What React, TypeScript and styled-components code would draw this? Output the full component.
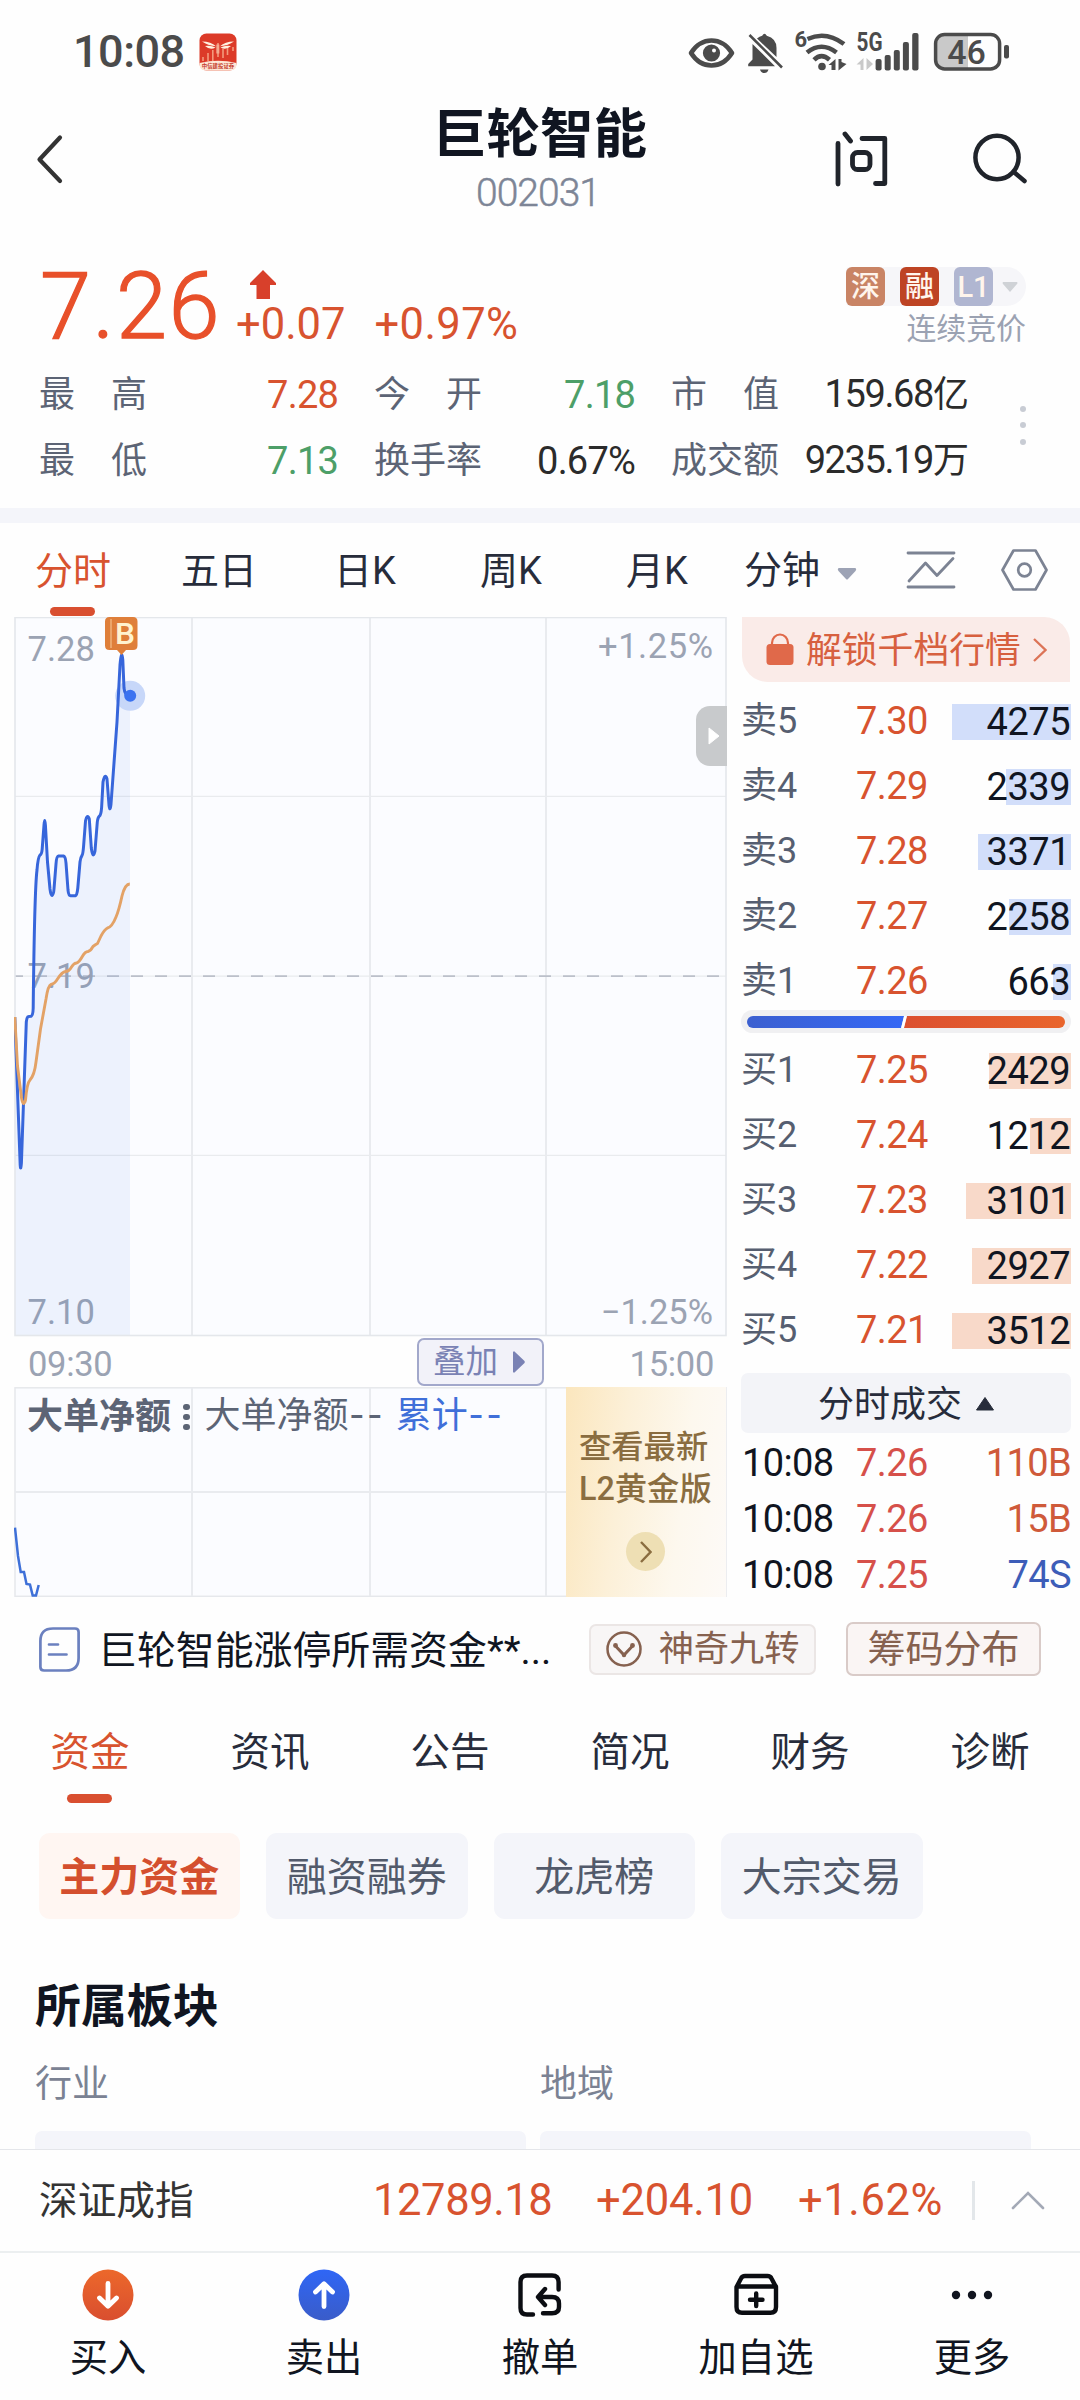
import React from "react";
import styled, { createGlobalStyle } from "styled-components";

const RED = "#d8532f";
const GREEN = "#4d9f68";
const INK = "#101521";
const NAVY = "#272c3b";
const SLATE = "#5c6475";
const MUTED = "#9ba3b3";
const FONT = `Roboto, "Noto Sans CJK SC", sans-serif`;

const GlobalStyle = createGlobalStyle`
  * { box-sizing: border-box; }
  body { margin: 0; background: #fefefe; }
  svg { display: block; flex: none; }
  svg text { font-family: ${FONT}; }
`;

const Screen = styled.div`
  width: 1080px;
  height: 2400px;
  overflow: hidden;
  display: flex;
  flex-direction: column;
  background: #fefefe;
  color: ${INK};
  font-family: ${FONT};
  white-space: nowrap;
`;

const StatusBar = styled.div`
  flex: none;
  height: 103px;
  display: flex;
  align-items: center;
  justify-content: space-between;
  padding: 0 70px 0 73px;
`;

const StatusLeft = styled.div`
  display: flex;
  align-items: center;
  gap: 14px;
`;

const Clock = styled.span`
  font-size: 45px;
  line-height: 50px;
  font-weight: 500;
  letter-spacing: -0.5px;
  color: #4b4b4b;
`;

const Header = styled.header`
  flex: none;
  height: 110px;
  display: grid;
  grid-template-columns: 300px 1fr 300px;
  align-items: center;
`;

const HeaderSide = styled.div<{ $end?: boolean }>`
  display: flex;
  align-items: center;
  justify-content: ${(p) => (p.$end ? "flex-end" : "flex-start")};
  gap: 84px;
  padding: ${(p) => (p.$end ? "0 52px 0 0" : "0 0 0 36px")};
`;

const TitleBlock = styled.div`
  display: flex;
  flex-direction: column;
  align-items: center;
  padding-top: 1px;
`;

const Title = styled.h1`
  margin: 0;
  font-size: 53.5px;
  line-height: 62px;
  font-weight: 600;
`;

const Code = styled.span`
  margin: 6px 4px 0 0;
  font-size: 39px;
  line-height: 42px;
  letter-spacing: -1px;
  font-weight: 300;
  -webkit-text-stroke: 0.5px currentColor;
  color: #7d8596;
`;

const Quote = styled.section`
  flex: none;
  height: 295px;
  padding: 48px 54px 0 39px;
`;

const QuoteTop = styled.div`
  display: flex;
  height: 92px;
`;

const Price = styled.div`
  width: 197px;
  font-size: 92px;
  line-height: 92px;
  font-weight: 300;
  letter-spacing: 1.5px;
  -webkit-text-stroke: 1.3px currentColor;
  padding-left: 1px;
  color: #e8502a;
`;

const ChangeBlock = styled.div`
  align-self: flex-end;
  margin-bottom: 6px;
  display: flex;
  flex-direction: column;
  gap: 4px;
`;

const ArrowSlot = styled.div`
  padding-left: 14px;
`;

const Changes = styled.div`
  display: flex;
  gap: 29px;
  font-size: 43.5px;
  line-height: 44px;
  color: ${RED};
`;

const Percent = styled.span`
  letter-spacing: 0.4px;
`;

const BadgeBlock = styled.div`
  margin: 6px 0 0 auto;
  display: flex;
  flex-direction: column;
  align-items: flex-end;
`;

const BadgeRow = styled.div`
  display: flex;
  align-items: center;
  gap: 15px;
  height: 39px;
  padding-right: 8px;
  border-radius: 4px 20px 20px 4px;
  background: #f6f6f9;
  svg { margin-left: -6px; }
`;

const Badge = styled.span<{ $bg: string }>`
  width: 39px;
  height: 39px;
  border-radius: 6px;
  background: ${(p) => p.$bg};
  color: #fff5ec;
  font-size: 29px;
  line-height: 40px;
  font-weight: 500;
  text-align: center;
`;

const Phase = styled.span`
  font-size: 29.9px;
  line-height: 45px;
  color: #9ba2b2;
`;

const StatsRow = styled.div`
  margin-top: 8px;
  display: flex;
  align-items: center;
  justify-content: space-between;
`;

const StatsGrid = styled.div`
  display: grid;
  grid-template-columns: 299px 261px 298px;
  column-gap: 36px;
  grid-auto-rows: 66px;
  align-items: center;
`;

const Stat = styled.div`
  display: flex;
  justify-content: space-between;
  align-items: center;
  line-height: 50px;
  padding-top: 1px;
`;

const StatLabel = styled.span`
  font-size: 36px;
  color: ${SLATE};
`;

const StatValue = styled.span<{ $color?: string; $tight?: boolean }>`
  font-size: 38px;
  letter-spacing: ${(p) => (p.$tight ? -1.4 : -0.8)}px;
  color: ${(p) => p.$color ?? "#2b2b2b"};
`;

const Unit = styled.span`
  font-size: 36px;
  letter-spacing: 0;
`;

const MoreDots = styled.div`
  display: flex;
  flex-direction: column;
  gap: 10.5px;
  padding-bottom: 4px;
`;

const Dot = styled.i<{ $size: number; $color: string }>`
  width: ${(p) => p.$size}px;
  height: ${(p) => p.$size}px;
  border-radius: 50%;
  background: ${(p) => p.$color};
`;

const Band = styled.div`
  flex: none;
  height: 15px;
  background: #f4f5fa;
`;

const PeriodTabs = styled.nav`
  flex: none;
  height: 94px;
  display: flex;
  align-items: center;
`;

const PeriodTab = styled.div<{ $active?: boolean }>`
  position: relative;
  width: 146px;
  height: 94px;
  line-height: 96px;
  text-align: center;
  font-size: 38px;
  color: ${(p) => (p.$active ? RED : NAVY)};
`;

const Underline = styled.i`
  position: absolute;
  left: 50%;
  bottom: 1px;
  width: 45px;
  height: 9px;
  margin-left: -23px;
  border-radius: 5px;
  background: #d94f30;
`;

const MinuteTab = styled.div`
  display: flex;
  align-items: center;
  gap: 17px;
  height: 94px;
  margin-left: 14px;
  font-size: 38px;
  line-height: 96px;
  color: ${NAVY};
`;

const ToolIcons = styled.div`
  margin-left: auto;
  padding-right: 32px;
  display: flex;
  align-items: center;
  gap: 45px;
`;

const Market = styled.section`
  flex: none;
  height: 980px;
  display: grid;
  grid-template-columns: 727px 330px;
  column-gap: 14px;
`;

const ChartColumn = styled.div`
  padding-left: 14px;
`;

const Stack = styled.div`
  display: grid;
  & > * { grid-area: 1 / 1; }
`;

const Handle = styled.button`
  justify-self: end;
  align-self: start;
  margin: 89px 0 0;
  padding: 0 0 0 12px;
  width: 31px;
  height: 60px;
  border: 0;
  border-radius: 14px 0 0 14px;
  background: #c8cacc;
  display: flex;
  align-items: center;
`;

const TimeAxis = styled.div`
  height: 50px;
  display: flex;
  align-items: center;
  padding: 0 13px 0 14px;
  font-size: 34.5px;
  color: ${MUTED};
`;

const AxisTime = styled.span`
  line-height: 50px;
  margin-top: 3px;
  letter-spacing: -0.3px;
`;

const OverlayButton = styled.button`
  margin: 0 86px 0 auto;
  width: 127px;
  height: 48px;
  padding: 0 2px 0 0;
  display: flex;
  align-items: center;
  justify-content: center;
  gap: 15px;
  border: 2px solid #a2a8cb;
  border-radius: 7px;
  background: #f2f2f9;
  font-family: inherit;
  font-size: 32.5px;
  line-height: 40px;
  color: #7a82b4;
`;

const SubContent = styled.div`
  display: flex;
  justify-content: space-between;
  height: 210px;
`;

const SubLegend = styled.div`
  display: flex;
  align-items: center;
  height: 60px;
  padding-left: 13px;
  font-size: 36px;
  line-height: 60px;
  color: ${SLATE};
`;

const LegendName = styled.b`
  font-weight: 700;
`;

const LegendDots = styled.div`
  display: flex;
  flex-direction: column;
  gap: 3.5px;
  margin: 0 15px 0 12px;
`;

const LegendValue = styled.span<{ $accent?: boolean }>`
  margin: -2px 10px 0 0;
  color: ${(p) => (p.$accent ? "#3f6fd9" : SLATE)};
`;

const Dashes = styled.span`
  padding-left: 1px;
  font-family: "Noto Sans CJK SC", sans-serif;
  font-size: 42px;
  line-height: 1;
  letter-spacing: 3.5px;
`;

const GoldCard = styled.div`
  width: 160px;
  margin-right: 1px;
  padding: 39px 0 0 13px;
  background: linear-gradient(97deg, #fbe6bd 0%, #fcf0d8 35%, #fdf8ee 70%, #fdfaf7 100%);
  color: #8a6d40;
  font-size: 32.3px;
  line-height: 42px;
  font-weight: 500;
`;

const GoldGo = styled.div`
  width: 39px;
  height: 39px;
  margin: 22px 0 0 47px;
  border-radius: 50%;
  background: #eedfb4;
  display: flex;
  align-items: center;
  justify-content: center;
`;

const BookColumn = styled.div`
  display: flex;
  flex-direction: column;
`;

const Unlock = styled.div`
  flex: none;
  width: 328px;
  height: 65px;
  margin: 0 0 6px 1px;
  padding-left: 24px;
  display: flex;
  align-items: center;
  border-radius: 0 26px 0 26px;
  background: #faebe8;
  color: #d7603f;
  font-size: 35.8px;
  line-height: 60px;
`;

const UnlockText = styled.span`
  margin: 2px 12px 0 12px;
`;

const BookRow = styled.div`
  flex: none;
  height: 65px;
  display: grid;
  grid-template-columns: 115px 71px 1fr;
  align-items: center;
  line-height: 67px;
  font-size: 38px;
`;

const Level = styled.span`
  font-size: 36px;
  color: #565e70;
`;

const BookPrice = styled.span`
  letter-spacing: -0.6px;
  color: ${RED};
`;

const Volume = styled.div<{ $depth: number; $color: string }>`
  height: 36px;
  line-height: 36px;
  padding-right: 1px;
  text-align: right;
  letter-spacing: -0.5px;
  background: linear-gradient(${(p) => p.$color}, ${(p) => p.$color}) right / ${(p) => p.$depth}px 100% no-repeat;
`;

const Ratio = styled.div`
  flex: none;
  height: 23px;
  margin: -3px 0 4px;
  padding: 6px 6px 5px;
  border-radius: 12px;
  background: #f0f0f2;
`;

const TradesHead = styled.div`
  flex: none;
  height: 60px;
  margin-top: 11px;
  padding-top: 2px;
  display: flex;
  align-items: center;
  justify-content: center;
  gap: 14px;
  border-radius: 7px;
  background: #f3f4f8;
  color: ${NAVY};
  font-size: 36px;
  line-height: 60px;
`;

const TradesLabel = styled.span`
  padding-top: 2px;
`;

const TradeRow = styled.div`
  flex: none;
  height: 56px;
  display: grid;
  grid-template-columns: 114px 80px 1fr;
  line-height: 60px;
  font-size: 38px;
`;

const TradeCell = styled.span<{ $color: string; $right?: boolean }>`
  color: ${(p) => p.$color};
  text-align: ${(p) => (p.$right ? "right" : "left")};
  padding-left: ${(p) => (p.$right ? 0 : 1)}px;
  letter-spacing: -0.6px;
`;

const InfoRow = styled.div`
  flex: none;
  height: 105px;
  display: flex;
  align-items: center;
  padding: 0 39px 0 38px;
`;

const Headline = styled.span`
  flex: none;
  width: 463px;
  margin: 3px 28px 0 17px;
  font-size: 38.9px;
  line-height: 56px;
`;

const FeatureButton = styled.button<{ $strong?: boolean }>`
  flex: none;
  width: ${(p) => (p.$strong ? 195 : 227)}px;
  height: ${(p) => (p.$strong ? 54 : 51)}px;
  margin: -1px 0 0 ${(p) => (p.$strong ? 30 : 0)}px;
  padding: 0;
  display: flex;
  align-items: center;
  justify-content: center;
  gap: 17px;
  border: 2px solid ${(p) => (p.$strong ? "#d9cbc8" : "#ebe6e5")};
  border-radius: 7px;
  background: ${(p) => (p.$strong ? "#faf5f4" : "#f8f6f6")};
  color: #86614f;
  font-family: inherit;
  font-size: ${(p) => (p.$strong ? 38 : 35.2)}px;
  line-height: 44px;
`;

const SectionTabs = styled.nav`
  flex: none;
  height: 102px;
  display: grid;
  grid-template-columns: repeat(6, 180px);
`;

const SectionTab = styled.div<{ $active?: boolean }>`
  position: relative;
  line-height: 102px;
  text-align: center;
  font-size: 39.5px;
  color: ${(p) => (p.$active ? RED : NAVY)};
`;

const Pills = styled.div`
  flex: none;
  margin: 29px 0 0 38.5px;
  display: flex;
  gap: 26px;
`;

const Pill = styled.div<{ $active?: boolean }>`
  width: 201.5px;
  height: 86px;
  border-radius: 11px;
  text-align: center;
  font-size: 40px;
  line-height: 89px;
  font-weight: ${(p) => (p.$active ? 600 : 400)};
  background: ${(p) => (p.$active ? "#fff6f2" : "#f4f5fa")};
  color: ${(p) => (p.$active ? "#d44f2e" : "#525a6b")};
`;

const Sector = styled.section`
  flex: 1;
  min-height: 0;
  overflow: hidden;
  padding: 57px 0 0 35px;
`;

const SectorTitle = styled.h2`
  margin: 0;
  font-size: 45.9px;
  line-height: 60px;
  font-weight: 600;
`;

const SectorGrid = styled.div`
  margin-top: 24px;
  display: grid;
  grid-template-columns: 491px 491px;
  column-gap: 14px;
`;

const SectorLabel = styled.div`
  font-size: 37px;
  line-height: 50px;
  color: #7b8293;
`;

const SectorCard = styled.div`
  height: 60px;
  margin-top: 21px;
  border-radius: 7px;
  background: #f4f5fa;
`;

const IndexBar = styled.div`
  flex: none;
  height: 104px;
  display: flex;
  align-items: center;
  padding: 0 35px 0 39px;
  border-top: 1px solid #e4e6ea;
  border-bottom: 2px solid #eceff0;
`;

const IndexName = styled.span`
  width: 334px;
  font-size: 38.7px;
  line-height: 60px;
  color: #333;
`;

const IndexValue = styled.span<{ $width: number; $track?: number }>`
  width: ${(p) => p.$width}px;
  font-size: 43.5px;
  line-height: 60px;
  padding-top: 1px;
  letter-spacing: ${(p) => p.$track ?? -0.4}px;
  color: ${RED};
`;

const IndexRule = styled.i`
  width: 3px;
  height: 39px;
  margin: 0 36px 0 auto;
  background: #e3e7ea;
`;

const BottomNav = styled.nav`
  flex: none;
  height: 147px;
  display: grid;
  grid-template-columns: repeat(5, 216px);
`;

const NavItem = styled.div`
  display: flex;
  flex-direction: column;
  align-items: center;
  padding-top: 16px;
`;

const NavIcon = styled.div`
  height: 52px;
  display: flex;
  align-items: center;
`;

const NavLabel = styled.span`
  margin-top: 8px;
  font-size: 38.3px;
  line-height: 58px;
`;

function AppBadge() {
  return (
    <svg width="38" height="38" viewBox="0 0 38 38">
      <rect x="0.5" y="0.5" width="37" height="37" rx="7" fill="#dc3a28" />
      <path d="M0.5 30 Q19 25.5 37.5 30 V31 Q37.5 37.5 31 37.5 H7 Q0.5 37.5 0.5 31 Z" fill="#fde7d6" />
      <path d="M3 8.5 Q12 8.5 17 13.2 Q10 13 3 8.5 Z M6 13 Q12 12 16.5 14.5 Q11 17.5 6 13 Z M35 8.5 Q26 8.5 21 13.2 Q28 13 35 8.5 Z M32 13 Q26 12 21.5 14.5 Q27 17.5 32 13 Z M17.6 11.5 h2.6 v9 h-2.6 z" fill="#fff1df" />
      <path d="M19 10 v14 M13.8 17 v11 M9 20 v8 M4 24 v4 M24 16 v9 M28.500 15 v7 M34 14 v4" stroke="#f39a7c" strokeWidth="1.6" />
      <text x="19" y="35.3" fontSize="5.4" fontWeight="700" textAnchor="middle" fill="#c5402f">中信建投证券</text>
    </svg>
  );
}

function StatusIcons() {
  return (
    <svg width="322" height="60" viewBox="688 21 322 60" fill="#4b4b4b">
      <path d="M691 52 Q699 39.500 711.500 39.500 T732 52 Q724 64.500 711.500 64.500 T691 52 Z" fill="none" stroke="#4b4b4b" strokeWidth="4.600" strokeLinejoin="round" />
      <circle cx="711.500" cy="52" r="8.600" />
      <circle cx="714" cy="49.500" r="2" fill="#fff" />
      <path d="M752.500 43 L775 65.200 H748.200 V63 L752.500 58.500 Z M757 37.500 Q759.500 35.300 762.200 34.800 Q764.500 30.500 766.800 34.800 Q776.500 37.500 776.500 47 V56 Z M760 68.500 H768.500 Q767.500 72 764.300 72 Q761 72 760 68.500 Z" />
      <path d="M749.500 34 L782 66.500" stroke="#4b4b4b" strokeWidth="2.600" />
      <text x="794.500" y="46" fontSize="22" fontWeight="700">6</text>
      <g fill="none" stroke="#4b4b4b" strokeWidth="4.600">
        <path d="M807.500 38 Q826 29.500 844 43" />
        <path d="M807 51.500 Q821.500 40 836.500 51.500" />
        <path d="M814 58.800 Q821.500 51.500 829.500 58.800" />
      </g>
      <circle cx="822" cy="65.500" r="3.800" />
      <path d="M828.500 64 L835.500 58 V69 H831.500 V64 Z M838.500 58 H841.500 V61 L846.500 63 L838.500 69.500 Z" />
      <text x="856.500" y="50.300" fontSize="25" fontWeight="700" textLength="26" lengthAdjust="spacingAndGlyphs">5G</text>
      <path d="M856.500 63.500 L863.500 57 V69 H860.500 V63.500 Z M866.500 57 L873 63 L866.500 69 Z" fill="#c9c9c9" />
      <g>
        <rect x="875.600" y="58" width="6" height="11.500" rx="2" />
        <rect x="884.700" y="54" width="6" height="15.500" rx="2" />
        <rect x="893.800" y="49" width="6" height="20.500" rx="2" />
        <rect x="902.900" y="41" width="6" height="28.500" rx="2" />
        <rect x="912.200" y="32" width="6.300" height="37.500" rx="2" />
      </g>
      <path d="M968 34 H945 Q936 34 936 42 V59 Q936 67.500 945 67.500 H968 Z" fill="#c9c9c9" />
      <rect x="935.600" y="33.500" width="64" height="34.400" rx="9" fill="none" stroke="#4b4b4b" strokeWidth="3.500" />
      <rect x="1004" y="44" width="5" height="13.500" rx="2" />
      <text x="966.500" y="62.500" fontSize="34" fontWeight="500" textAnchor="middle">46</text>
    </svg>
  );
}

function BackIcon() {
  return (
    <svg width="28" height="50" viewBox="0 0 28 50" fill="none" stroke="#333" strokeWidth="4.200" strokeLinecap="round" strokeLinejoin="round">
      <path d="M24 3.500 L3.500 25.500 L24 47" />
    </svg>
  );
}

function AskIcon() {
  return (
    <svg width="54" height="56" viewBox="835 130.500 54 56" fill="none" stroke="#20242b" strokeWidth="4.800" strokeLinecap="round" strokeLinejoin="round">
      <path d="M838 143 V183.500 M845 133.500 L850.500 140.500 M862 138 H884.800 V183 H875.500" />
      <rect x="852.500" y="152" width="17.500" height="17" rx="5" />
    </svg>
  );
}

function SearchIcon() {
  return (
    <svg width="55" height="51" viewBox="973 133.500 55 51" fill="none" stroke="#20242b" strokeWidth="4.500" strokeLinecap="round">
      <ellipse cx="997" cy="158" rx="21.600" ry="21.800" />
      <path d="M1015 173.500 L1024.500 181.500" />
    </svg>
  );
}

function PriceChart() {
  const blue =
    "M14.800 1017 L20.200 1165 Q20.700 1172 21.400 1163 L26.300 1022 Q26.800 1016.500 28.500 1016.500 L31 1016.300 Q33 1015.500 33.200 1008 Q34.500 890 37 870 Q38 857 40 855 Q41.700 854.500 42.200 849 L44 825 Q44.700 816 45.400 825 L47.500 862 L50 889 Q50.800 895.500 52 895.500 Q53.600 895 54 889 L56 864 Q56.500 856.300 58.500 856 H63.500 Q65.500 856.500 66 863 L68 890 Q68.600 895.700 70.500 895.700 H75.500 Q77 895.500 77.800 888 L80 862 Q80.500 857.500 82 855.500 Q83 854 83.600 846 L85.500 821 Q87.200 813 89.300 819 L91.300 848 Q93 860 95 851 L97.300 822 Q97.800 817 100 815.500 Q101.500 813 101.800 804 L103 782 Q105 772.500 107 779 L109 805 Q110 813 111 804 L117 722 L120 665 Q121.600 648 122.800 660 L124 688 Q124.800 696 130 696";
  const avg =
    "M14.800 1017 L17.500 1066 L21.500 1098 Q23.300 1108 25.500 1100 Q27 1083 30 1080 Q34.500 1075 36 1062 L40.500 1029 L46 999 Q48 985.500 51 984.500 Q54.500 984 57.500 979 Q62 972 65.500 971.500 Q69 971.500 71.500 967 Q74 963 76.500 963 Q79 962.500 82 957 Q85 951.500 88 951.500 Q90.500 951 93 946.500 Q95.500 944.500 97.500 943.500 L101 936 Q104.500 929.500 107.500 928 Q112 927 116 917 Q119 910 122 896 Q125 884 129.800 884";
  return (
    <svg width="713" height="720" viewBox="14 617 713 720">
      <rect x="15" y="617.500" width="711" height="718" fill="#fbfcff" />
      <path d="M15 796.400 H726 M15 1155.300 H726" stroke="#e9ebee" strokeWidth="1.300" />
      <path d="M192 618 V1335 M370 618 V1335 M546 618 V1335" stroke="#e9ebef" strokeWidth="2" />
      <path d="M15 976.200 H726" stroke="#e9ebee" strokeWidth="1.300" />
      <path d="M15 976.200 H726" stroke="#bcc0ca" strokeWidth="1.800" strokeDasharray="12 12" strokeDashoffset="4" />
      <g fontSize="34.500" fill={MUTED}>
        <text x="27.500" y="661">7.28</text>
        <text x="27.500" y="988">7.19</text>
        <text x="27.500" y="1324">7.10</text>
        <text x="713" y="658" textAnchor="end" textLength="115">+1.25%</text>
        <text x="713" y="1324" textAnchor="end">−1.25%</text>
      </g>
      <path d={`${blue} V1335 H15 Z`} fill="#4b7fe0" fillOpacity="0.080" />
      <rect x="15" y="617.500" width="711" height="718" fill="none" stroke="#e4e7eb" strokeWidth="1.600" />
      <circle cx="130.200" cy="695.800" r="15" fill="#c7d7f9" />
      <path d={blue} fill="none" stroke="#3766db" strokeWidth="3" strokeLinejoin="round" />
      <circle cx="130.200" cy="695.800" r="6" fill="#3b72f0" />
      <path d={avg} fill="none" stroke="#e3a266" strokeWidth="2.900" strokeLinejoin="round" />
      <path d="M109.500 617 H133 Q137.500 617 137.500 621.500 V645.500 Q137.500 650 133 650 H126 L121.500 655 L117 650 H109.500 Q105 650 105 645.500 V621.500 Q105 617 109.500 617 Z" fill="#df7f3a" />
      <path d="M111 619 V648" stroke="#f0b27a" strokeWidth="1.500" />
      <text x="115" y="643.500" fontSize="30" fontWeight="500" fill="#fff3cf" textLength="20" lengthAdjust="spacingAndGlyphs">B</text>
    </svg>
  );
}

function FlowChart() {
  return (
    <svg width="713" height="210" viewBox="14 1387 713 210">
      <rect x="15" y="1387.800" width="711" height="208.500" fill="#fbfcff" stroke="#e6e8ec" strokeWidth="1.500" />
      <path d="M15 1492 H726 M192 1388 V1596 M370 1388 V1596 M546 1388 V1596" stroke="#e9ebef" strokeWidth="2" />
      <path d="M15 1527.600 L18 1556 L20.700 1572 H24 L26.500 1584 L30 1584.600 L32.700 1595.600 H36 L38.700 1585" fill="none" stroke="#3e70d8" strokeWidth="2.500" />
    </svg>
  );
}

function RatioBar() {
  return (
    <svg width="318" height="12" viewBox="0 0 318 12">
      <defs>
        <linearGradient id="sellSide"><stop offset="0" stopColor="#3c60d0" /><stop offset="1" stopColor="#3467f5" /></linearGradient>
        <linearGradient id="buySide"><stop offset="0" stopColor="#dc5030" /><stop offset="1" stopColor="#e9652c" /></linearGradient>
      </defs>
      <path d="M6 0 H157 L154 12 H6 A6 6 0 0 1 6 0 Z" fill="url(#sellSide)" />
      <path d="M160 0 H312 A6 6 0 0 1 312 12 H157 Z" fill="url(#buySide)" />
      <path d="M158.500 0 L155.500 12" stroke="#fff" strokeWidth="2.500" />
    </svg>
  );
}

const sells: [string, string, string, number][] = [
  ["卖5", "7.30", "4275", 119],
  ["卖4", "7.29", "2339", 65],
  ["卖3", "7.28", "3371", 93],
  ["卖2", "7.27", "2258", 62],
  ["卖1", "7.26", "663", 18],
];
const buys: [string, string, string, number][] = [
  ["买1", "7.25", "2429", 82],
  ["买2", "7.24", "1212", 41],
  ["买3", "7.23", "3101", 105],
  ["买4", "7.22", "2927", 99],
  ["买5", "7.21", "3512", 119],
];
const trades: [string, string, string, string][] = [
  ["10:08", "7.26", "110B", "#cf5a3a"],
  ["10:08", "7.26", "15B", "#cf5a3a"],
  ["10:08", "7.25", "74S", "#3d5db8"],
];

function Book({ rows, color }: { rows: typeof sells; color: string }) {
  return (
    <>
      {rows.map(([level, price, volume, depth]) => (
        <BookRow key={level}>
          <Level>{level}</Level>
          <BookPrice>{price}</BookPrice>
          <Volume $depth={depth} $color={color}>{volume}</Volume>
        </BookRow>
      ))}
    </>
  );
}

const stroke = { fill: "none", stroke: "#0b0d12", strokeWidth: 4.4, strokeLinecap: "round", strokeLinejoin: "round" } as const;

function CircleArrow({ up }: { up?: boolean }) {
  const id = up ? "navSell" : "navBuy";
  return (
    <svg width="52" height="52" viewBox="0 0 52 52">
      <defs>
        <linearGradient id={id} x1="0" y1="0" x2="0" y2="1">
          <stop offset="0" stopColor={up ? "#2f66f6" : "#ec682b"} />
          <stop offset="1" stopColor={up ? "#3a5cc9" : "#d94e2f"} />
        </linearGradient>
      </defs>
      <circle cx="26" cy="26" r="25.500" fill={`url(#${id})`} />
      <path
        d={up ? "M26 37.500 V15.500 M17.500 23 L26 14.800 L34.500 23" : "M26 14.500 V36.500 M17.500 29 L26 37.200 L34.500 29"}
        fill="none" stroke="#fff" strokeWidth="4.800" strokeLinecap="round" strokeLinejoin="round"
      />
    </svg>
  );
}

const navItems = [
  { label: "买入", icon: <CircleArrow /> },
  { label: "卖出", icon: <CircleArrow up /> },
  {
    label: "撤单",
    icon: (
      <svg width="46" height="46" viewBox="517 2273 46 46" {...stroke}>
        <path d="M533 2315.500 H527 Q520.500 2315.500 520.500 2309 V2283 Q520.500 2276.500 527 2276.500 H552 Q558.600 2276.500 558.600 2283 V2290.500" />
        <path d="M545 2290 L538 2298 L545 2306 M539 2298 H552 Q559 2298 559 2304.500 V2308 Q559 2314.300 552 2314.300 H543" />
      </svg>
    ),
  },
  {
    label: "加自选",
    icon: (
      <svg width="46" height="44" viewBox="732 2274 46 44" {...stroke}>
        <path d="M735.500 2288 V2308 Q735.500 2313.800 741 2313.800 H769.500 Q775 2313.800 775 2308 V2288 L770.500 2279.500 Q769.300 2277 766.500 2277 H744 Q741.200 2277 740 2279.500 Z M736 2287.500 H775 M755.200 2294.500 V2307 M749 2300.700 H761.500" />
      </svg>
    ),
  },
  {
    label: "更多",
    icon: (
      <svg width="44" height="12" viewBox="0 0 44 12" fill="#11151f">
        <circle cx="6" cy="6" r="4.200" /><circle cx="22" cy="6" r="4.200" /><circle cx="38" cy="6" r="4.200" />
      </svg>
    ),
  },
];

export default function App() {
  return (
    <>
      <GlobalStyle />
      <Screen>
        <StatusBar>
          <StatusLeft>
            <Clock>10:08</Clock>
            <AppBadge />
          </StatusLeft>
          <StatusIcons />
        </StatusBar>

        <Header>
          <HeaderSide><BackIcon /></HeaderSide>
          <TitleBlock>
            <Title>巨轮智能</Title>
            <Code>002031</Code>
          </TitleBlock>
          <HeaderSide $end><AskIcon /><SearchIcon /></HeaderSide>
        </Header>

        <Quote>
          <QuoteTop>
            <Price>7.26</Price>
            <ChangeBlock>
              <ArrowSlot>
                <svg width="26" height="29" viewBox="0 0 26 29"><path d="M13 0 L26 13 V15 H20 V29 H6.500 V15 H0 V13 Z" fill="#d8402b" /></svg>
              </ArrowSlot>
              <Changes><span>+0.07</span><Percent>+0.97%</Percent></Changes>
            </ChangeBlock>
            <BadgeBlock>
              <BadgeRow>
                <Badge $bg="#c98465">深</Badge>
                <Badge $bg="#be4424">融</Badge>
                <Badge $bg="#b0b6d1">L1</Badge>
                <svg width="16" height="10" viewBox="0 0 16 10"><path d="M1 0 H15 Q16 1 15 2 L8 10 L1 2 Q0 1 1 0 Z" fill="#cfd2d6" /></svg>
              </BadgeRow>
              <Phase>连续竞价</Phase>
            </BadgeBlock>
          </QuoteTop>
          <StatsRow>
            <StatsGrid>
              <Stat><StatLabel>最　高</StatLabel><StatValue $color={RED}>7.28</StatValue></Stat>
              <Stat><StatLabel>今　开</StatLabel><StatValue $color={GREEN}>7.18</StatValue></Stat>
              <Stat><StatLabel>市　值</StatLabel><StatValue $tight>159.68<Unit>亿</Unit></StatValue></Stat>
              <Stat><StatLabel>最　低</StatLabel><StatValue $color={GREEN}>7.13</StatValue></Stat>
              <Stat><StatLabel>换手率</StatLabel><StatValue>0.67%</StatValue></Stat>
              <Stat><StatLabel>成交额</StatLabel><StatValue $tight>9235.19<Unit>万</Unit></StatValue></Stat>
            </StatsGrid>
            <MoreDots>
              {[0, 1, 2].map((i) => <Dot key={i} $size={6} $color="#c8ccd4" />)}
            </MoreDots>
          </StatsRow>
        </Quote>

        <Band />

        <PeriodTabs>
          <PeriodTab $active>分时<Underline /></PeriodTab>
          <PeriodTab>五日</PeriodTab>
          <PeriodTab>日K</PeriodTab>
          <PeriodTab>周K</PeriodTab>
          <PeriodTab>月K</PeriodTab>
          <MinuteTab>
            分钟
            <svg width="20" height="20" viewBox="0 0 20 20"><path d="M1.500 5 H18.500 Q20 6.500 18.500 8 L11 16 Q10 17 9 16 L1.500 8 Q0 6.500 1.500 5 Z" fill="#9da3b5" transform="translate(0 3)" /></svg>
          </MinuteTab>
          <ToolIcons>
            <svg width="50" height="40" viewBox="0 0 50 40" fill="none" stroke="#7c8393" strokeWidth="2.800" strokeLinecap="round" strokeLinejoin="round">
              <path d="M2 3 H48 M2 37 H48 M3 31 L19.500 13 L31 25.500 L47 8.500" />
            </svg>
            <svg width="47" height="42" viewBox="0 0 47 42" fill="none" stroke="#7c8393" strokeWidth="2.700" strokeLinejoin="round">
              <path d="M12.500 1.500 H34.500 L45.500 21 L34.500 40.500 H12.500 L1.500 21 Z" /><circle cx="23.500" cy="21" r="6.300" />
            </svg>
          </ToolIcons>
        </PeriodTabs>

        <Market>
          <ChartColumn>
            <Stack>
              <PriceChart />
              <Handle>
                <svg width="12" height="18" viewBox="0 0 12 18"><path d="M1 1 L11 9 L1 17 Z" fill="#fff" stroke="#fff" strokeLinejoin="round" /></svg>
              </Handle>
            </Stack>
            <TimeAxis>
              <AxisTime>09:30</AxisTime>
              <OverlayButton>
                叠加
                <svg width="12" height="22" viewBox="0 0 12 22"><path d="M0 1 Q1 -0.500 2 1 L11.500 10 Q12 11 11.500 12 L2 21 Q1 22.500 0 21 Z" fill="#7a82b4" /></svg>
              </OverlayButton>
              <AxisTime>15:00</AxisTime>
            </TimeAxis>
            <Stack>
              <FlowChart />
              <SubContent>
                <SubLegend>
                  <LegendName>大单净额</LegendName>
                  <LegendDots>
                    {[0, 1, 2].map((i) => <Dot key={i} $size={6.5} $color={SLATE} />)}
                  </LegendDots>
                  <LegendValue>大单净额<Dashes>--</Dashes></LegendValue>
                  <LegendValue $accent>累计<Dashes>--</Dashes></LegendValue>
                </SubLegend>
                <GoldCard>
                  <div>查看最新</div>
                  <div>L2黄金版</div>
                  <GoldGo>
                    <svg width="12" height="22" viewBox="0 0 12 22" fill="none" stroke="#8a6d40" strokeWidth="2.400"><path d="M1 1 L10.500 11 L1 21" /></svg>
                  </GoldGo>
                </GoldCard>
              </SubContent>
            </Stack>
          </ChartColumn>

          <BookColumn>
            <Unlock>
              <svg width="28" height="33" viewBox="0 0 28 33">
                <path d="M6 12 V10 A8 8.500 0 0 1 22 10 V12" fill="none" stroke="#e0694a" strokeWidth="2.200" />
                <rect x="0.500" y="11" width="27" height="21" rx="3.500" fill="#e0694a" />
              </svg>
              <UnlockText>解锁千档行情</UnlockText>
              <svg width="14" height="24" viewBox="0 0 14 24" fill="none" stroke="#dc7457" strokeWidth="2.300"><path d="M1 1 L12.500 12 L1 23" /></svg>
            </Unlock>
            <Book rows={sells} color="#d2defa" />
            <Ratio><RatioBar /></Ratio>
            <Book rows={buys} color="#f8d9c9" />
            <TradesHead>
              <TradesLabel>分时成交</TradesLabel>
              <svg width="18" height="14" viewBox="0 0 18 14"><path d="M9 0.500 L17.500 13 H0.500 Z" fill={NAVY} stroke={NAVY} strokeLinejoin="round" /></svg>
            </TradesHead>
            {trades.map(([time, price, volume, color]) => (
              <TradeRow key={volume}>
                <TradeCell $color={INK}>{time}</TradeCell>
                <TradeCell $color="#d6504a">{price}</TradeCell>
                <TradeCell $color={color} $right>{volume}</TradeCell>
              </TradeRow>
            ))}
          </BookColumn>
        </Market>

        <InfoRow>
          <svg width="43" height="47" viewBox="38 1626 43 47" fill="none" stroke="#6b80bf" strokeWidth="2.700" strokeLinecap="round">
            <path d="M53 1628.500 H75 Q78.600 1628.500 78.600 1632 V1658 Q78.600 1670.500 66 1670.500 H44 Q40.400 1670.500 40.400 1667 V1641 Q40.400 1628.500 53 1628.500 Z" />
            <path d="M49 1644.500 H58 M49 1654.500 H66.500" />
          </svg>
          <Headline>巨轮智能涨停所需资金**...</Headline>
          <FeatureButton>
            <svg width="36" height="36" viewBox="0 0 36 36" fill="none" stroke="#86614f" strokeWidth="2.500">
              <ellipse cx="18" cy="18" rx="16.500" ry="16.500" />
              <path d="M9.500 15 L18 24 L26.500 15" strokeWidth="3" />
              <circle cx="9.500" cy="14.500" r="1.200" /><circle cx="26.500" cy="14.500" r="1.200" /><circle cx="18" cy="24" r="1" />
            </svg>
            神奇九转
          </FeatureButton>
          <FeatureButton $strong>筹码分布</FeatureButton>
        </InfoRow>

        <SectionTabs>
          <SectionTab $active>资金<Underline /></SectionTab>
          {["资讯", "公告", "简况", "财务", "诊断"].map((t) => <SectionTab key={t}>{t}</SectionTab>)}
        </SectionTabs>

        <Pills>
          <Pill $active>主力资金</Pill>
          <Pill>融资融券</Pill>
          <Pill>龙虎榜</Pill>
          <Pill>大宗交易</Pill>
        </Pills>

        <Sector>
          <SectorTitle>所属板块</SectorTitle>
          <SectorGrid>
            <div><SectorLabel>行业</SectorLabel><SectorCard /></div>
            <div><SectorLabel>地域</SectorLabel><SectorCard /></div>
          </SectorGrid>
        </Sector>

        <IndexBar>
          <IndexName>深证成指</IndexName>
          <IndexValue $width={223}>12789.18</IndexValue>
          <IndexValue $width={202} $track={-0.2}>+204.10</IndexValue>
          <IndexValue $width={150} $track={0.6}>+1.62%</IndexValue>
          <IndexRule />
          <svg width="34" height="19" viewBox="0 0 34 19" fill="none" stroke="#a3a9b6" strokeWidth="2.600" strokeLinecap="round"><path d="M2 17 L17 2 L32 17" /></svg>
        </IndexBar>

        <BottomNav>
          {navItems.map(({ label, icon }) => (
            <NavItem key={label}>
              <NavIcon>{icon}</NavIcon>
              <NavLabel>{label}</NavLabel>
            </NavItem>
          ))}
        </BottomNav>
      </Screen>
    </>
  );
}
